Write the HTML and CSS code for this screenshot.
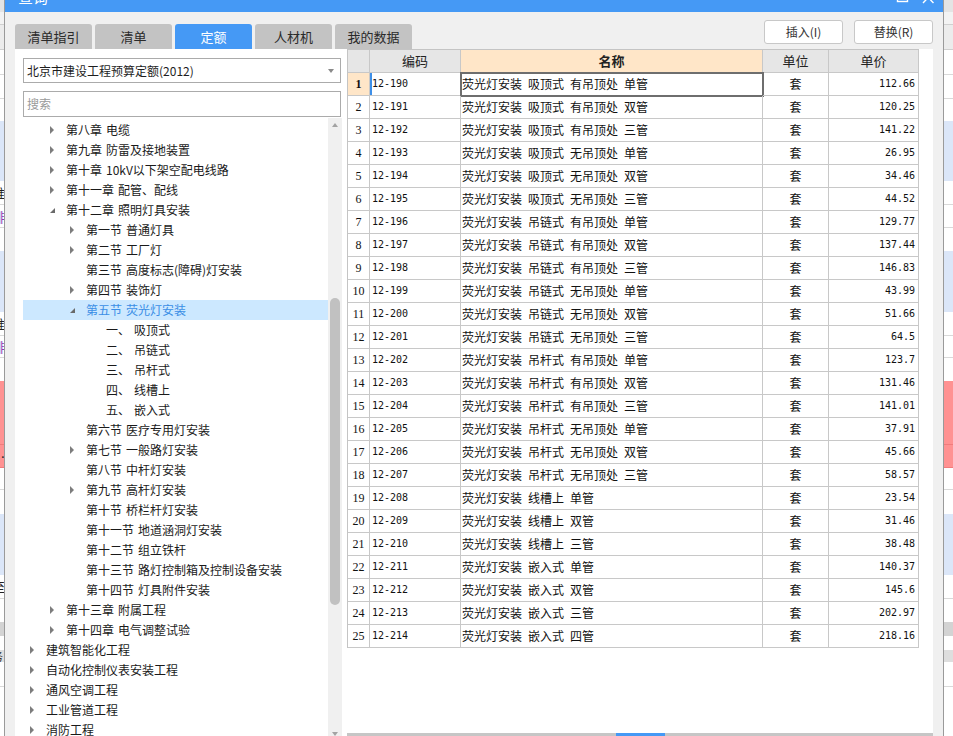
FILE: index.html
```html
<!DOCTYPE html>
<html lang="zh-CN">
<head>
<meta charset="utf-8">
<title>查询</title>
<link rel="stylesheet" href="styles.css">
</head>
<body>
<div class="desk">
  <div class="bg">
    <div class="band b-top"></div>
    <div class="band b-tool"></div>
    <div class="band b-head"></div>
    <div class="band h25"></div>
    <div class="band h24"></div>
    <div class="band h22 nb"></div>
    <div class="band blue h60"></div>
    <div class="band h24"><span class="frag">推</span></div>
    <div class="band h23"><span class="frag purple">排</span></div>
    <div class="band h23 nb"></div>
    <div class="band blue h61"></div>
    <div class="band h24"><span class="frag">推</span></div>
    <div class="band h22"><span class="frag purple">排</span></div>
    <div class="band h23 nb"></div>
    <div class="band pink h64"></div>
    <div class="band pink h23"><span class="frag">…</span></div>
    <div class="band h22"></div>
    <div class="band h24 nb"></div>
    <div class="band blue h61"></div>
    <div class="band h24"><span class="frag">至</span></div>
    <div class="band h23 nb"></div>
    <div class="band gray h14"></div>
    <div class="band h14 nb"></div>
    <div class="band gray2 h12"><span class="frag small">务</span></div>
    <div class="band h25"></div>
    <div class="band h40 nb"></div>
  </div>

  <div class="dialog">
    <div class="titlebar">
      <span class="title">查询</span>
      <svg class="win-ctrls" width="38" height="30" viewBox="0 0 38 30">
        <rect x="1.5" y="9.5" width="10" height="10" fill="none" stroke="#fff" stroke-width="1.4"/>
        <path d="M27 10 L37.5 21 M37.5 10 L27 21" stroke="#fff" stroke-width="1.4" fill="none"/>
      </svg>
    </div>

    <div class="toprow">
      <div class="tabs">
        <div class="tab">清单指引</div>
        <div class="tab">清单</div>
        <div class="tab active">定额</div>
        <div class="tab">人材机</div>
        <div class="tab">我的数据</div>
      </div>
      <div class="actions">
        <button class="btn">插入(I)</button>
        <button class="btn">替换(R)</button>
      </div>
    </div>

    <div class="body">
      <div class="leftpane">
        <div class="select"><span>北京市建设工程预算定额(2012)</span><span class="caret"></span></div>
        <div class="search">搜索</div>
        <div class="tree">
          <ul class="tree-list">
            <li class="node l1"><i class="tw closed"></i><span>第八章 电缆</span></li>
            <li class="node l1"><i class="tw closed"></i><span>第九章 防雷及接地装置</span></li>
            <li class="node l1"><i class="tw closed"></i><span>第十章 10kV以下架空配电线路</span></li>
            <li class="node l1"><i class="tw closed"></i><span>第十一章 配管、配线</span></li>
            <li class="node l1"><i class="tw open"></i><span>第十二章 照明灯具安装</span></li>
            <li class="node l2"><i class="tw closed"></i><span>第一节 普通灯具</span></li>
            <li class="node l2"><i class="tw closed"></i><span>第二节 工厂灯</span></li>
            <li class="node l2"><i class="tw"></i><span>第三节 高度标志(障碍)灯安装</span></li>
            <li class="node l2"><i class="tw closed"></i><span>第四节 装饰灯</span></li>
            <li class="node l2 sel"><i class="tw open"></i><span>第五节 荧光灯安装</span></li>
            <li class="node l3"><i class="tw"></i><span>一、 吸顶式</span></li>
            <li class="node l3"><i class="tw"></i><span>二、 吊链式</span></li>
            <li class="node l3"><i class="tw"></i><span>三、 吊杆式</span></li>
            <li class="node l3"><i class="tw"></i><span>四、 线槽上</span></li>
            <li class="node l3"><i class="tw"></i><span>五、 嵌入式</span></li>
            <li class="node l2"><i class="tw"></i><span>第六节 医疗专用灯安装</span></li>
            <li class="node l2"><i class="tw closed"></i><span>第七节 一般路灯安装</span></li>
            <li class="node l2"><i class="tw"></i><span>第八节 中杆灯安装</span></li>
            <li class="node l2"><i class="tw closed"></i><span>第九节 高杆灯安装</span></li>
            <li class="node l2"><i class="tw"></i><span>第十节 桥栏杆灯安装</span></li>
            <li class="node l2"><i class="tw"></i><span>第十一节 地道涵洞灯安装</span></li>
            <li class="node l2"><i class="tw"></i><span>第十二节 组立铁杆</span></li>
            <li class="node l2"><i class="tw"></i><span>第十三节 路灯控制箱及控制设备安装</span></li>
            <li class="node l2"><i class="tw"></i><span>第十四节 灯具附件安装</span></li>
            <li class="node l1"><i class="tw closed"></i><span>第十三章 附属工程</span></li>
            <li class="node l1"><i class="tw closed"></i><span>第十四章 电气调整试验</span></li>
            <li class="node l0"><i class="tw closed"></i><span>建筑智能化工程</span></li>
            <li class="node l0"><i class="tw closed"></i><span>自动化控制仪表安装工程</span></li>
            <li class="node l0"><i class="tw closed"></i><span>通风空调工程</span></li>
            <li class="node l0"><i class="tw closed"></i><span>工业管道工程</span></li>
            <li class="node l0"><i class="tw closed"></i><span>消防工程</span></li>
          </ul>
          <div class="vscroll">
            <span class="arrow-up"></span>
            <span class="thumb"></span>
            <span class="arrow-down"></span>
          </div>
        </div>
      </div>

      <div class="rightpane">
        <div class="grid">
          <div class="gr head"><div class="c-no"></div><div class="c-code">编码</div><div class="c-name">名称</div><div class="c-unit">单位</div><div class="c-price">单价</div></div>
          <div class="gr cur"><div class="c-no">1</div><div class="c-code">12-190</div><div class="c-name">荧光灯安装 吸顶式 有吊顶处 单管</div><div class="c-unit">套</div><div class="c-price">112.66</div></div>
          <div class="gr"><div class="c-no">2</div><div class="c-code">12-191</div><div class="c-name">荧光灯安装 吸顶式 有吊顶处 双管</div><div class="c-unit">套</div><div class="c-price">120.25</div></div>
          <div class="gr"><div class="c-no">3</div><div class="c-code">12-192</div><div class="c-name">荧光灯安装 吸顶式 有吊顶处 三管</div><div class="c-unit">套</div><div class="c-price">141.22</div></div>
          <div class="gr"><div class="c-no">4</div><div class="c-code">12-193</div><div class="c-name">荧光灯安装 吸顶式 无吊顶处 单管</div><div class="c-unit">套</div><div class="c-price">26.95</div></div>
          <div class="gr"><div class="c-no">5</div><div class="c-code">12-194</div><div class="c-name">荧光灯安装 吸顶式 无吊顶处 双管</div><div class="c-unit">套</div><div class="c-price">34.46</div></div>
          <div class="gr"><div class="c-no">6</div><div class="c-code">12-195</div><div class="c-name">荧光灯安装 吸顶式 无吊顶处 三管</div><div class="c-unit">套</div><div class="c-price">44.52</div></div>
          <div class="gr"><div class="c-no">7</div><div class="c-code">12-196</div><div class="c-name">荧光灯安装 吊链式 有吊顶处 单管</div><div class="c-unit">套</div><div class="c-price">129.77</div></div>
          <div class="gr"><div class="c-no">8</div><div class="c-code">12-197</div><div class="c-name">荧光灯安装 吊链式 有吊顶处 双管</div><div class="c-unit">套</div><div class="c-price">137.44</div></div>
          <div class="gr"><div class="c-no">9</div><div class="c-code">12-198</div><div class="c-name">荧光灯安装 吊链式 有吊顶处 三管</div><div class="c-unit">套</div><div class="c-price">146.83</div></div>
          <div class="gr"><div class="c-no">10</div><div class="c-code">12-199</div><div class="c-name">荧光灯安装 吊链式 无吊顶处 单管</div><div class="c-unit">套</div><div class="c-price">43.99</div></div>
          <div class="gr"><div class="c-no">11</div><div class="c-code">12-200</div><div class="c-name">荧光灯安装 吊链式 无吊顶处 双管</div><div class="c-unit">套</div><div class="c-price">51.66</div></div>
          <div class="gr"><div class="c-no">12</div><div class="c-code">12-201</div><div class="c-name">荧光灯安装 吊链式 无吊顶处 三管</div><div class="c-unit">套</div><div class="c-price">64.5</div></div>
          <div class="gr"><div class="c-no">13</div><div class="c-code">12-202</div><div class="c-name">荧光灯安装 吊杆式 有吊顶处 单管</div><div class="c-unit">套</div><div class="c-price">123.7</div></div>
          <div class="gr"><div class="c-no">14</div><div class="c-code">12-203</div><div class="c-name">荧光灯安装 吊杆式 有吊顶处 双管</div><div class="c-unit">套</div><div class="c-price">131.46</div></div>
          <div class="gr"><div class="c-no">15</div><div class="c-code">12-204</div><div class="c-name">荧光灯安装 吊杆式 有吊顶处 三管</div><div class="c-unit">套</div><div class="c-price">141.01</div></div>
          <div class="gr"><div class="c-no">16</div><div class="c-code">12-205</div><div class="c-name">荧光灯安装 吊杆式 无吊顶处 单管</div><div class="c-unit">套</div><div class="c-price">37.91</div></div>
          <div class="gr"><div class="c-no">17</div><div class="c-code">12-206</div><div class="c-name">荧光灯安装 吊杆式 无吊顶处 双管</div><div class="c-unit">套</div><div class="c-price">45.66</div></div>
          <div class="gr"><div class="c-no">18</div><div class="c-code">12-207</div><div class="c-name">荧光灯安装 吊杆式 无吊顶处 三管</div><div class="c-unit">套</div><div class="c-price">58.57</div></div>
          <div class="gr"><div class="c-no">19</div><div class="c-code">12-208</div><div class="c-name">荧光灯安装 线槽上 单管</div><div class="c-unit">套</div><div class="c-price">23.54</div></div>
          <div class="gr"><div class="c-no">20</div><div class="c-code">12-209</div><div class="c-name">荧光灯安装 线槽上 双管</div><div class="c-unit">套</div><div class="c-price">31.46</div></div>
          <div class="gr"><div class="c-no">21</div><div class="c-code">12-210</div><div class="c-name">荧光灯安装 线槽上 三管</div><div class="c-unit">套</div><div class="c-price">38.48</div></div>
          <div class="gr"><div class="c-no">22</div><div class="c-code">12-211</div><div class="c-name">荧光灯安装 嵌入式 单管</div><div class="c-unit">套</div><div class="c-price">140.37</div></div>
          <div class="gr"><div class="c-no">23</div><div class="c-code">12-212</div><div class="c-name">荧光灯安装 嵌入式 双管</div><div class="c-unit">套</div><div class="c-price">145.6</div></div>
          <div class="gr"><div class="c-no">24</div><div class="c-code">12-213</div><div class="c-name">荧光灯安装 嵌入式 三管</div><div class="c-unit">套</div><div class="c-price">202.97</div></div>
          <div class="gr"><div class="c-no">25</div><div class="c-code">12-214</div><div class="c-name">荧光灯安装 嵌入式 四管</div><div class="c-unit">套</div><div class="c-price">218.16</div></div>
        </div>
        <div class="spacer"></div>
        <div class="hbar"><span class="hbar-mark"></span></div>
      </div>
    </div>
  </div>
</div>
</body>
</html>
```

FILE: styles.css
```css
* { box-sizing: border-box; }
html, body { margin: 0; padding: 0; }
body {
  font-family: "Noto Sans CJK SC", "Noto Sans", sans-serif;
  font-size: 12px;
  color: #1e1e1e;
  background: #fff;
  overflow: hidden;
}
.desk { position: relative; width: 953px; height: 736px; overflow: hidden; }

/* background application behind the dialog */
.bg { display: flex; flex-direction: column; }
.band {
  flex: none;
  background: #fff;
  border-bottom: 1px solid #d9d9d9;
  font-size: 13px;
  white-space: nowrap;
  display: flex;
  align-items: center;
  overflow: hidden;
}
.band.nb { border-bottom: none; }
.b-top { height: 12px; background: #e4e4e4; border-bottom: none; }
.b-tool { height: 13px; background: #f3f3f3; border-bottom: 1px solid #d0d0d0; }
.b-head { height: 25px; background: #ececec; border-bottom: 1px solid #cfcfcf; }
.h12 { height: 12px; } .h14 { height: 14px; } .h22 { height: 22px; } .h23 { height: 23px; }
.h24 { height: 24px; } .h25 { height: 25px; } .h40 { height: 40px; } .h60 { height: 60px; }
.h61 { height: 61px; } .h64 { height: 64px; }
.band.blue { background: #dbe6f8; border-bottom: none; }
.band.pink { background: #ff9292; border-bottom: 1px solid #f07c7c; }
.band.gray { background: #d3d3d3; border-bottom: none; }
.band.gray2 { background: #dedede; border-bottom: none; }
.frag { margin-left: -8px; color: #222; }
.frag.purple { color: #8b3bb5; }
.frag.small { font-size: 11px; }

/* dialog window */
.dialog {
  position: absolute;
  left: 4px;
  top: -18px;
  width: 940px;
  height: 760px;
  background: #f0f0f0;
  border-left: 1px solid #9a9a9a;
  border-right: 1px solid #9a9a9a;
  display: flex;
  flex-direction: column;
}
.titlebar {
  flex: none;
  height: 30px;
  background: #4599f5;
  display: flex;
  align-items: center;
  padding-left: 13px;
  color: #fff;
}
.title { font-size: 15px; line-height: 30px; }
.win-ctrls { margin-left: auto; margin-right: 9px; display: block; }

.toprow {
  flex: none;
  height: 37px;
  padding: 0 10px;
  display: flex;
  justify-content: space-between;
}
.tabs { display: flex; gap: 3px; align-self: flex-end; }
.tab {
  width: 77px;
  height: 25px;
  border-radius: 3px 3px 0 0;
  background: #c3c3c3;
  color: #2a2a2a;
  font-size: 13px;
  line-height: 25px;
  text-align: center;
}
.tab.active { background: #4599f5; color: #fff; }
.actions { display: flex; gap: 11px; padding-top: 8px; align-items: flex-start; }
.btn {
  width: 79px;
  height: 24px;
  background: #fff;
  border: 1px solid #c8c8c8;
  border-radius: 3px;
  font-family: "Noto Sans CJK SC", sans-serif;
  font-size: 12px;
  color: #333;
  padding: 0;
  line-height: 22px;
}

.body { flex: 1; display: flex; padding: 0 10px; min-height: 0; }

/* left: tree */
.leftpane {
  width: 332px;
  flex: none;
  background: #fff;
  padding: 9px 5px 0 8px;
  display: flex;
  flex-direction: column;
}
.select {
  flex: none;
  height: 25px;
  margin-right: 1px;
  border: 1px solid #ababab;
  display: flex;
  align-items: center;
  padding-left: 3px;
  color: #1e1e1e;
}
.caret {
  margin-left: auto;
  margin-right: 6px;
  width: 0;
  height: 0;
  border-top: 4px solid #8a8a8a;
  border-left: 3.5px solid transparent;
  border-right: 3.5px solid transparent;
}
.search {
  flex: none;
  margin-top: 8px;
  height: 26px;
  margin-right: 1px;
  border: 1px solid #ababab;
  padding-left: 3px;
  line-height: 24px;
  color: #9a9a9a;
}
.tree { flex: none; margin-top: 1px; height: 622px; display: flex; }
.tree-list { flex: 1; list-style: none; margin: 0; padding: 2px 0 0; }
.node {
  height: 20px;
  line-height: 20px;
  display: flex;
  align-items: center;
  white-space: nowrap;
  word-spacing: 1.3px;
  color: #1a1a1a;
}
.node.sel { background: #cce8ff; color: #3a8ee6; }
.l0 { padding-left: 7px; }
.l1 { padding-left: 27px; }
.l2 { padding-left: 47px; }
.l3 { padding-left: 67px; }
.tw { width: 16px; height: 20px; display: flex; align-items: center; flex: none; }
.tw.closed::before {
  content: "";
  width: 0;
  height: 0;
  border-left: 4px solid #7d7d7d;
  border-top: 4px solid transparent;
  border-bottom: 4px solid transparent;
}
.tw.open::before {
  content: "";
  width: 0;
  height: 0;
  border-right: 5px solid #6a6a6a;
  border-top: 5px solid transparent;
  margin-top: 1px;
}
.vscroll {
  flex: none;
  width: 14px;
  background: #f0f0f0;
  display: flex;
  flex-direction: column;
  align-items: center;
}
.arrow-up {
  margin-top: 5px;
  width: 0;
  height: 0;
  border-bottom: 4px solid #a3a3a3;
  border-left: 3.5px solid transparent;
  border-right: 3.5px solid transparent;
}
.thumb {
  margin-top: 171px;
  width: 10px;
  height: 307px;
  background: #c1c1c1;
  border-radius: 5px;
}
.arrow-down {
  margin-top: auto;
  margin-bottom: 4px;
  width: 0;
  height: 0;
  border-top: 4px solid #a3a3a3;
  border-left: 3.5px solid transparent;
  border-right: 3.5px solid transparent;
}

/* right: grid */
.rightpane {
  width: 586px;
  flex: none;
  height: 687px;
  background: #fff;
  display: flex;
  flex-direction: column;
}
.grid {
  width: 572px;
  border-left: 1px solid #c4c4c4;
  border-top: 1px solid #c4c4c4;
}
.gr {
  display: grid;
  grid-template-columns: 22px 91px 302px 66px 90px;
  height: 23px;
}
.gr > div {
  border-right: 1px solid #c8c8c8;
  border-bottom: 1px solid #c8c8c8;
  line-height: 22px;
  white-space: nowrap;
  overflow: hidden;
  color: #111;
}
.c-no { text-align: center; font-family: "Liberation Serif", serif; font-size: 12px; }
.c-code { padding-left: 2px; font-family: "DejaVu Sans Mono", monospace; font-size: 10px; }
.c-name { padding-left: 1px; font-size: 12px; word-spacing: 3.3px; }
.c-unit { text-align: center; font-size: 12px; }
.c-price { text-align: right; padding-right: 3px; font-family: "DejaVu Sans Mono", monospace; font-size: 10px; }

.gr.head > div {
  background: #e6e6e6;
  text-align: center;
  font-family: "Noto Sans CJK SC", sans-serif;
  font-size: 13px;
  color: #222;
  padding: 0;
}
.gr.head > .c-name { background: #ffe6c8; font-weight: bold; }

.gr.cur > .c-no { background: #ffe6c8; font-weight: bold; }
.gr.cur > .c-code { box-shadow: inset 2px 0 0 #3d8fe8; }
.gr.cur > .c-name { outline: 2px solid #6e6e6e; outline-offset: -1px; overflow: visible; }

.spacer { flex: 1; }
.hbar { flex: none; height: 3px; background: #c6c6c6; display: flex; }
.hbar-mark { width: 49px; height: 3px; margin-left: 269px; background: #4599f5; }
```
